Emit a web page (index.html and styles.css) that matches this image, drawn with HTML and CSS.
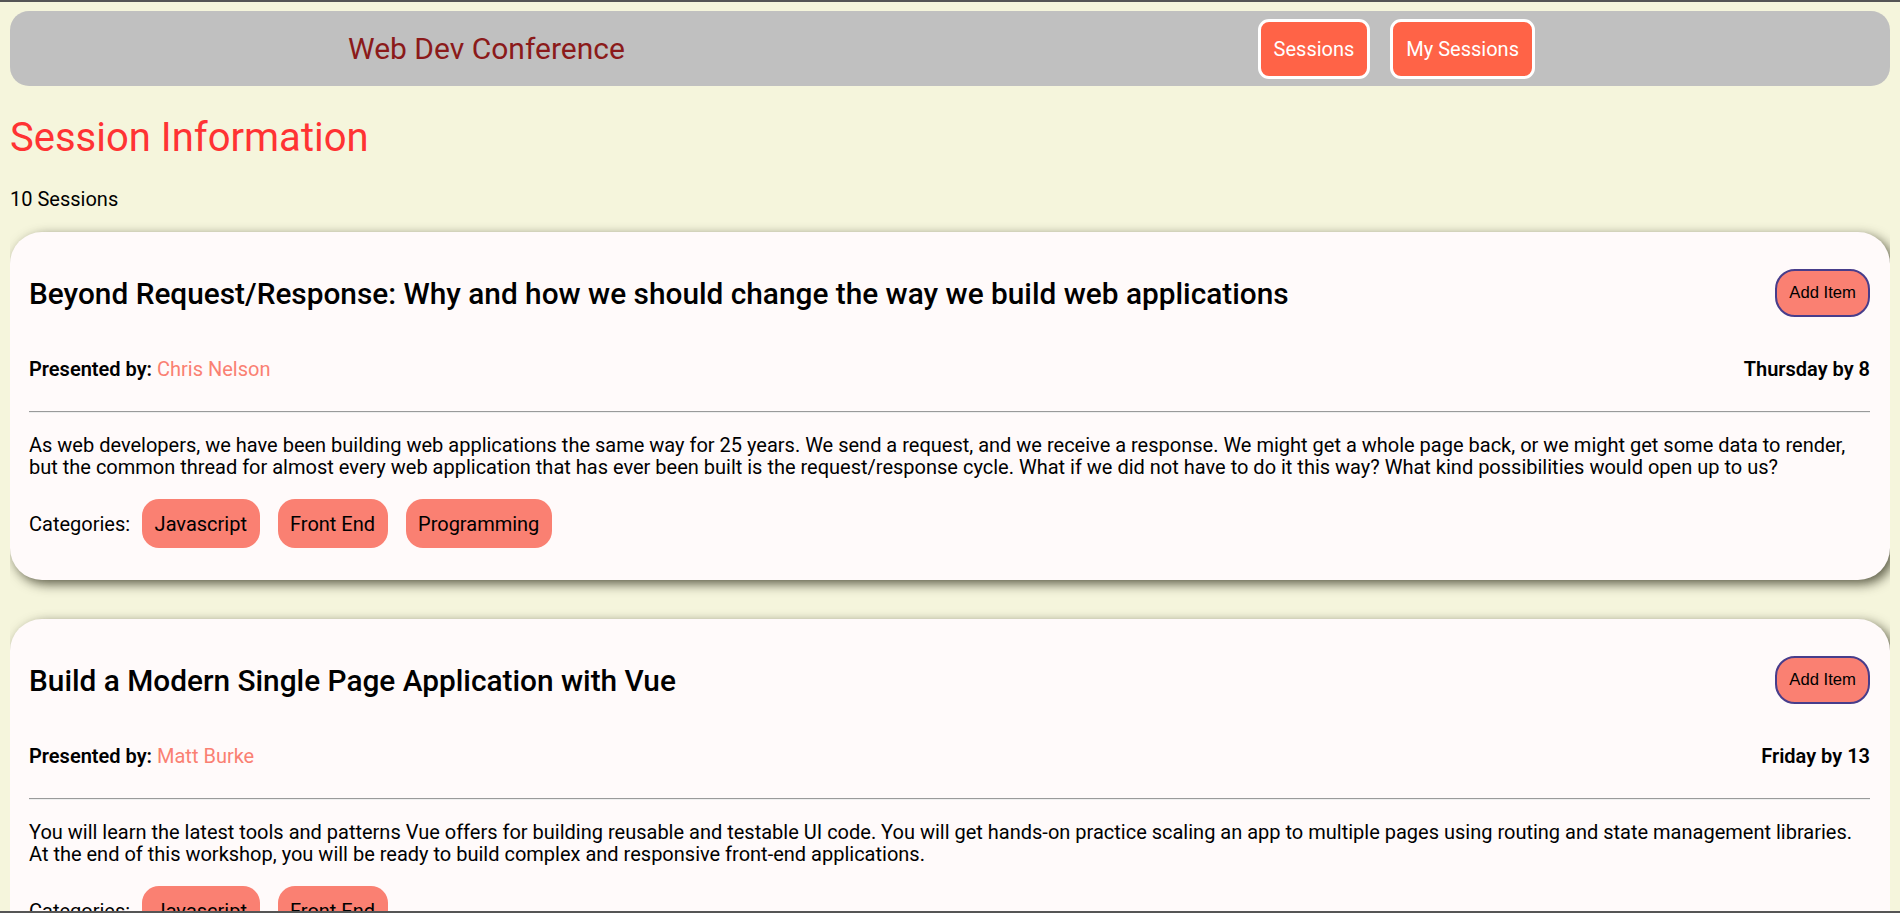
FILE: index.html
```html
<!DOCTYPE html>
<html lang="en">
<head>
<meta charset="utf-8">
<title>Web Dev Conference</title>
<link rel="stylesheet" href="styles.css">
</head>
<body>
<header class="topbar">
  <div class="brand">Web Dev Conference</div>
  <nav class="nav">
    <a class="nav-btn" href="#">Sessions</a>
    <a class="nav-btn" href="#">My Sessions</a>
  </nav>
</header>

<main>
  <h1 class="page-title">Session Information</h1>
  <p class="count">10 Sessions</p>

  <section class="card">
    <div class="card-head">
      <h2 class="card-title">Beyond Request/Response: Why and how we should change the way we build web applications</h2>
      <button class="add-btn">Add Item</button>
    </div>
    <div class="meta">
      <div><span class="label">Presented by:</span> <span class="speaker">Chris Nelson</span></div>
      <div class="when">Thursday by 8</div>
    </div>
    <hr class="rule">
    <p class="desc">As web developers, we have been building web applications the same way for 25 years. We send a request, and we receive a response. We might get a whole page back, or we might get some data to render, but the common thread for almost every web application that has ever been built is the request/response cycle. What if we did not have to do it this way? What kind possibilities would open up to us?</p>
    <div class="cats">
      <span class="cats-label">Categories:</span>
      <span class="chip">Javascript</span>
      <span class="chip">Front End</span>
      <span class="chip">Programming</span>
    </div>
  </section>

  <section class="card">
    <div class="card-head">
      <h2 class="card-title">Build a Modern Single Page Application with Vue</h2>
      <button class="add-btn">Add Item</button>
    </div>
    <div class="meta">
      <div><span class="label">Presented by:</span> <span class="speaker">Matt Burke</span></div>
      <div class="when">Friday by 13</div>
    </div>
    <hr class="rule">
    <p class="desc">You will learn the latest tools and patterns Vue offers for building reusable and testable UI code. You will get hands-on practice scaling an app to multiple pages using routing and state management libraries. At the end of this workshop, you will be ready to build complex and responsive front-end applications.</p>
    <div class="cats">
      <span class="cats-label">Categories:</span>
      <span class="chip">Javascript</span>
      <span class="chip">Front End</span>
    </div>
  </section>
</main>
</body>
</html>
```

FILE: styles.css
```css
html {
  border-top: 2px solid #555;
  background: #f5f5dc;
  scrollbar-width: none;
}

body {
  margin: 9px 10px 10px;
  font-family: Roboto, "Liberation Sans", sans-serif;
  font-size: 20px;
  color: #000;
  background: #f5f5dc;
}

body::after {
  content: "";
  position: fixed;
  left: 0;
  right: 0;
  bottom: 0;
  height: 2px;
  background: #555;
}

.topbar {
  display: flex;
  align-items: center;
  justify-content: space-between;
  height: 75px;
  padding: 0 355px 0 338px;
  background: #c0c0c0;
  border-radius: 19px;
}

.brand {
  font-size: 30px;
  color: #8b1a1a;
}

.nav {
  display: flex;
  gap: 20px;
}

.nav-btn {
  display: flex;
  align-items: center;
  height: 60px;
  box-sizing: border-box;
  padding: 0 13px;
  background: #ff6347;
  border: 3px solid #fff;
  border-radius: 11px;
  color: #fff;
  text-decoration: none;
  font-size: 20px;
}

.page-title {
  margin: 28px 0 26px;
  font-size: 40px;
  font-weight: 400;
  color: #f33;
}

.count {
  margin: 0 0 21px;
}

.card {
  background: #fffafa;
  border-radius: 32px;
  padding: 37px 20px 32px 19px;
  box-shadow: 4px 4px 12px rgba(40, 40, 20, 0.75);
  margin-bottom: 39px;
}

.card-head {
  display: flex;
  align-items: center;
  justify-content: space-between;
  min-height: 48px;
}

.card-title {
  margin: 0;
  font-size: 29.8px;
  font-weight: 500;
}

.add-btn {
  height: 48px;
  padding: 0 12px;
  background: #fa8072;
  border: 2px solid #483d8b;
  border-radius: 20px;
  font-family: "Liberation Sans", Arial, sans-serif;
  font-size: 16.67px;
  color: #000;
}

.meta {
  display: flex;
  justify-content: space-between;
  margin-top: 40px;
}

.label,
.when {
  font-weight: 600;
}

.speaker {
  color: #fa8072;
}

.rule {
  margin: 30px 0 0;
  border: 0;
  border-top: 1px solid #9a9a9a;
  border-bottom: 1px solid #eee;
  height: 0;
}

.desc {
  margin: 21px 0 0;
  line-height: 22px;
}

.cats {
  display: flex;
  align-items: center;
  margin-top: 21px;
}

.cats-label {
  margin-right: 12px;
}

.chip {
  display: flex;
  align-items: center;
  height: 49px;
  padding: 0 12.5px;
  margin-right: 18px;
  background: #fa8072;
  border-radius: 17px;
}
```
